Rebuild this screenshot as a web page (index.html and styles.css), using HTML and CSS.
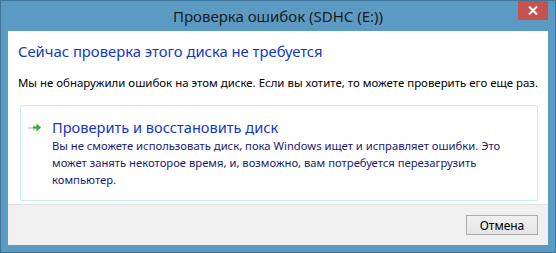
FILE: index.html
```html
<!DOCTYPE html>
<html lang="ru">

<head>
    <meta charset="UTF-8">
    <meta name="viewport" content="width=device-width, initial-scale=1.0">
    <title>Проверка ошибок</title>
    <link rel="stylesheet" href="styles.css">
</head>

<body>
    <div class="window">
        <div class="titlebar">
            <span></span>
            <div class="title">Проверка ошибок (SDHC (E:))</div>
            <button class="close" aria-label="Закрыть">
                <svg width="10" height="9" viewBox="0 0 10 9">
                    <path d="M1 0.5 L9 8.5 M9 0.5 L1 8.5" stroke="#fff" stroke-width="2"/>
                </svg>
            </button>
        </div>
        <div class="panel">
            <div class="main">
                <h1 class="instruction">Сейчас проверка этого диска не требуется</h1>
                <p class="message">Мы не обнаружили ошибок на этом диске. Если вы хотите, то можете проверить его еще раз.</p>
                <div class="command">
                    <svg class="arrow" width="14" height="10" viewBox="0 0 14 10">
                        <path d="M0 4 H5 V1 L9 5 L5 9 V6 H0 Z" fill="#d8d8d8"/>
                        <path d="M5 3.5 H8.5 V0.5 L13 4.5 L8.5 8.5 V5.5 H5 Z" fill="#1fb81f"/>
                    </svg>
                    <div class="command-text">
                        <div class="command-title">Проверить и восстановить диск</div>
                        <div class="command-note">Вы не сможете использовать диск, пока Windows ищет и исправляет ошибки. Это может занять некоторое время, и, возможно, вам потребуется перезагрузить компьютер.</div>
                    </div>
                </div>
            </div>
            <div class="footer">
                <button class="btn">Отмена</button>
            </div>
        </div>
    </div>
</body>

</html>
```

FILE: styles.css
```css
body {
    margin: 0;
    font-family: "Noto Sans", "Open Sans", sans-serif;
    background-color: #5b9bc3;
}

.window {
    height: 253px;
    box-sizing: border-box;
    border: 1px solid #3f7598;
    background-color: #5b9bc3;
    padding: 0 7px 7px 7px;
    display: flex;
    flex-direction: column;
}

.titlebar {
    height: 30px;
    display: grid;
    grid-template-columns: 1fr auto 1fr;
    align-items: start;
}

.title {
    font-size: 15px;
    line-height: 30px;
    color: #1a1a1a;
}

.close {
    justify-self: end;
    width: 30px;
    height: 19px;
    border: none;
    padding: 0;
    background-color: #c75050;
    display: flex;
    justify-content: center;
    align-items: center;
}

.panel {
    flex: 1;
    display: flex;
    flex-direction: column;
    background-color: #fff;
}

.main {
    flex: 1;
    padding: 0 10px;
}

.instruction {
    margin: 10px 0 0 0;
    font-size: 14.8px;
    font-weight: normal;
    line-height: 20px;
    color: #1537c4;
}

.message {
    margin: 14px -2px 0 0;
    font-size: 11.45px;
    line-height: 16px;
    color: #000;
    white-space: nowrap;
}

.command {
    margin: 14px 0 0 2px;
    border: 1px solid #c6ecf7;
    border-radius: 2px;
    height: 83px;
    padding: 11px 10px 0 7px;
    display: flex;
    gap: 10px;
}

.arrow {
    margin-top: 6px;
    flex-shrink: 0;
}

.command-title {
    font-size: 14.6px;
    line-height: 20px;
    color: #1537c4;
}

.command-note {
    font-size: 11.25px;
    line-height: 17px;
    color: #1a1a6e;
}

.footer {
    height: 41px;
    box-sizing: border-box;
    border-top: 1px solid #dfdfdf;
    background-color: #f0f0f0;
    display: flex;
    justify-content: flex-end;
    align-items: flex-start;
    padding: 10px 10px 0 0;
}

.btn {
    width: 72px;
    height: 20px;
    border: 1px solid #acacac;
    background: linear-gradient(#f0f0f0, #e5e5e5);
    font-family: inherit;
    font-size: 12px;
    color: #000;
    padding: 0;
}
```
